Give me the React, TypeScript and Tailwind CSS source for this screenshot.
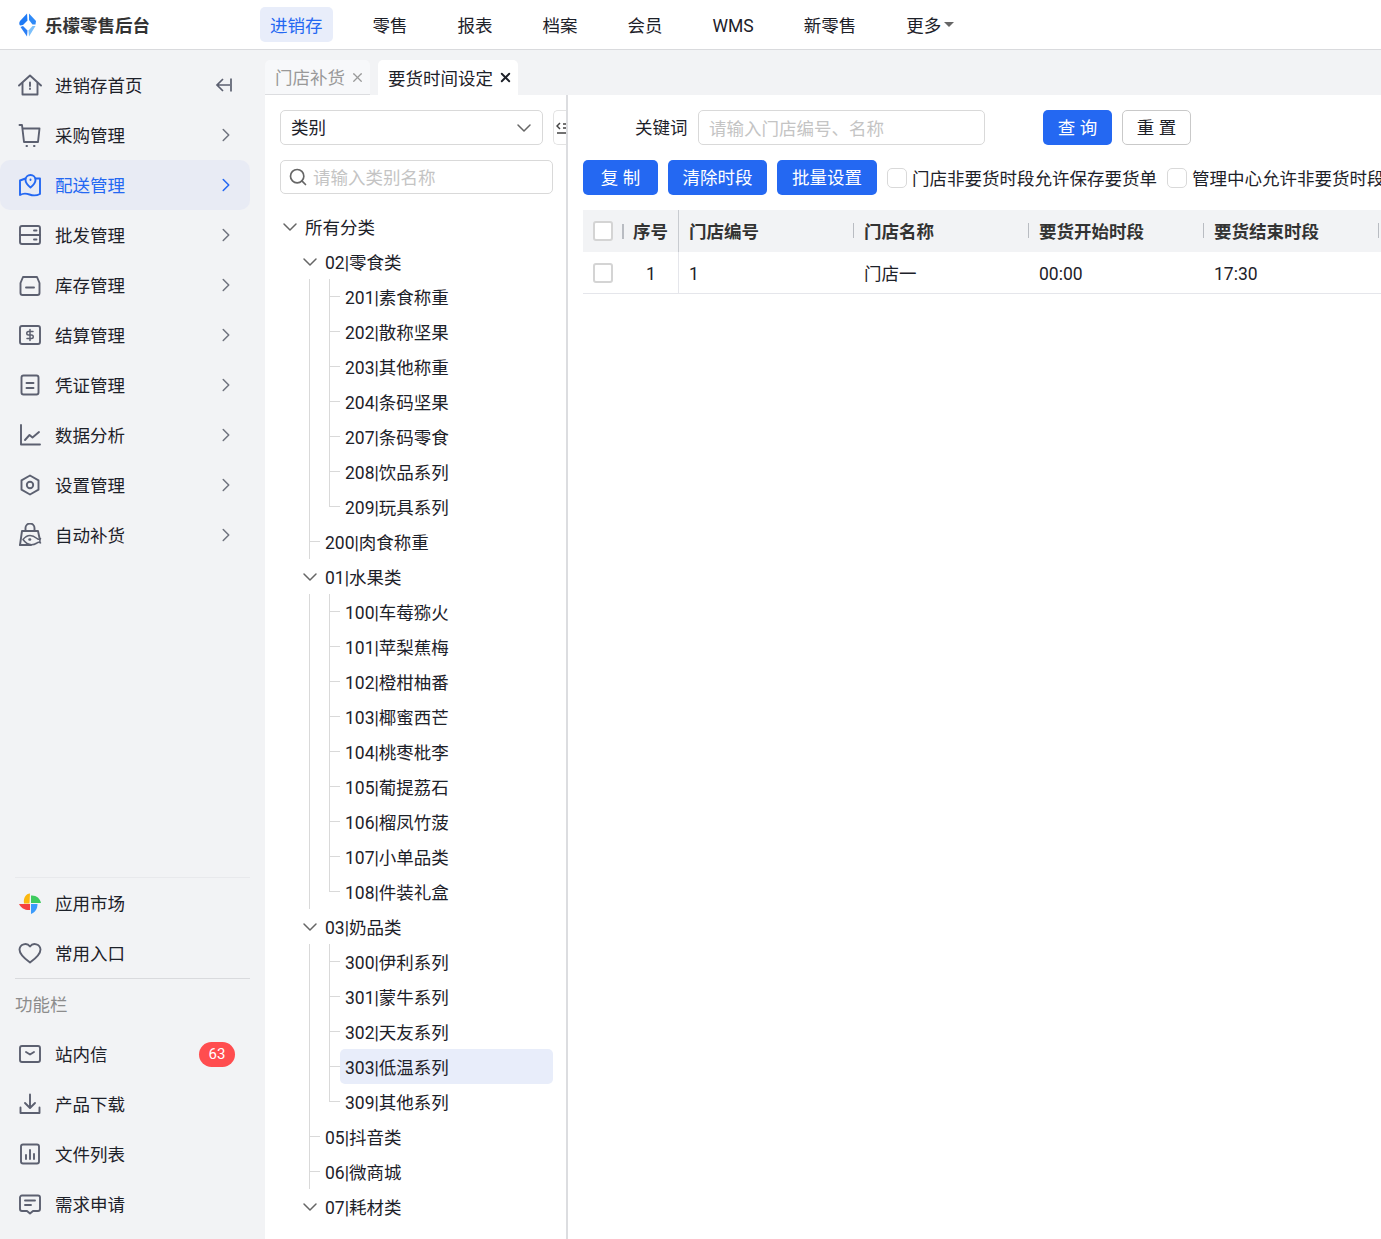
import { ChevronDown, ChevronRight, Search, X } from "lucide-react";
import type { ReactNode } from "react";

const stroke = "#5c6070";

function Icon({ children, color = stroke }: { children: ReactNode; color?: string }) {
  return (
    <svg width="24" height="24" viewBox="0 0 24 24" fill="none" stroke={color} strokeWidth="1.9" strokeLinecap="round" strokeLinejoin="round" className="shrink-0">
      {children}
    </svg>
  );
}

const icons: Record<string, ReactNode> = {
  home: (
    <>
      <path d="M1 12.500 12 2.500l11 10" />
      <path d="M4.500 10v11.500h15V10" />
      <path d="M12 9.500v3.500M12 15.500v.5" />
    </>
  ),
  cart: (
    <>
      <path d="M1.500 2h2.500L6 19h14l1.500-13.500H5" />
      <path d="M8.500 23h.5M16 23h.5" strokeWidth="2" />
    </>
  ),
  map: (
    <>
      <path d="M7.500 5.500 2 7.500V22c3-1.800 6-1.800 9.500-.5s7.500 1 10.500-.5V5.500l-4.500 0" />
      <path d="M12.500 14.500c-3-2.500-5-4.800-5-7.500a5 5 0 0 1 10 0c0 2.700-2 5-5 7.500Z" />
      <path d="M12.500 6.500v.5" />
    </>
  ),
  server: (
    <>
      <rect x="2" y="3" width="20" height="18" rx="2" />
      <path d="M2 12h20M16 7.500h2.500M16 16.500h2.500" />
    </>
  ),
  box: (
    <>
      <path d="M5 4h14l2.500 6v10a2 2 0 0 1-2 2h-15a2 2 0 0 1-2-2V10Z" />
      <path d="M8 14.500h8" />
    </>
  ),
  money: (
    <>
      <rect x="2" y="3" width="20" height="18" rx="2" />
      <path d="M15 8.500h-4.500a1.700 1.700 0 0 0 0 3.500h3a1.700 1.700 0 0 1 0 3.500H9M12 6.500v11" strokeWidth="1.500" />
    </>
  ),
  doc: (
    <>
      <rect x="3.500" y="2.500" width="17" height="19" rx="2" />
      <path d="M8.500 10h7M8.500 15h7" />
    </>
  ),
  chart: (
    <>
      <path d="M3 2v19.500h19" />
      <path d="M7 17l4.500-5 3 2.500L21 9" />
    </>
  ),
  hex: (
    <>
      <path d="m12 2.500 8.500 4.800v9.400L12 21.500l-8.500-4.800V7.300Z" />
      <circle cx="12" cy="12" r="3.200" />
    </>
  ),
  bag: (
    <>
      <path d="M2 22 4 8h16l1.500 7" />
      <path d="M7.500 8V5a4.500 4.500 0 0 1 9 0v3" />
      <path d="M2 22h11" />
      <path d="M5 16.500c4-5 9-5 14-1 1 1 2 1 3.500 0-1 2-1 3 0 4.500-1.500-1-2.500-1-3.500 0-5 3-10 2-14-3.500Z" strokeWidth="1.500" />
      <path d="M11.500 16.500h.5" strokeWidth="2.500" />
    </>
  ),
  heart: <path d="M12 21.500C5 16.500 1.500 13 1.500 8.500A5.800 5.800 0 0 1 12 5.500a5.800 5.800 0 0 1 10.500 3c0 4.500-3.500 8-10.500 13Z" />,
  inbox: (
    <>
      <rect x="2" y="4" width="20" height="16" rx="2" />
      <path d="m8 10 4 2.500 4-2.500" />
    </>
  ),
  download: <path d="M12 2.500v13M7 11l5 5 5-5M2.500 15.500v5.500h19v-5.500" />,
  bars: (
    <>
      <rect x="3" y="2.500" width="18" height="19" rx="2" />
      <path d="M8 13v4M12 8v9M16 12v5" />
    </>
  ),
  message: (
    <>
      <path d="M4 3.500h16a2 2 0 0 1 2 2V17a2 2 0 0 1-2 2h-5l-3 2.500L9 19H4a2 2 0 0 1-2-2V5.500a2 2 0 0 1 2-2Z" />
      <path d="M7 8.500h10M7 13h6" />
    </>
  ),
};

function Pinwheel() {
  return (
    <svg width="24" height="24" viewBox="0 0 24 24" className="shrink-0">
      <path d="M12 2.500C8 2.500 5 7 6 12.500h5.500Z" fill="#fbb80f" />
      <path d="M13 12V4.500c5-.5 9 2.500 10 7.500Z" fill="#3ecb5f" />
      <path d="M1 13h11v6c-5 .5-9-2-11-6Z" fill="#f5413f" />
      <path d="M13 13h6.500c0 5-2.500 8.500-6.500 10Z" fill="#3b9bfb" />
    </svg>
  );
}

function Logo() {
  return (
    <svg width="18" height="24" viewBox="0 0 18 24" className="shrink-0">
      <path d="M8 .5 1 8c-1 1.500-1 3 0 4.500l3-.5 4.500-4.500Z" fill="#1f7af5" />
      <path d="M10 .5 17 8l-.5 3.500h-3L10 7Z" fill="#2f8af7" />
      <path d="M1.500 14 8 23.500l.5-6L4 13Z" fill="#2a7ef5" />
      <path d="M16.500 13 10 23.500l-.5-6 4-4.500Z" fill="#7cc0fb" />
    </svg>
  );
}

function NavRow({ icon, label, active, arrow = true, extra }: { icon: ReactNode; label: string; active?: boolean; arrow?: boolean; extra?: ReactNode }) {
  return (
    <div className={`flex h-[50px] items-center rounded-[10px] pl-[18px] ${active ? "bg-[#e8ebf4] text-[#2468f2]" : "text-[#1d2129]"}`}>
      {icon}
      <span className="ml-[13px] flex-1 pt-[4px]">{label}</span>
      {extra}
      {arrow && <ChevronRight size={22} strokeWidth={1.7} className={`mr-[13px] ${active ? "text-[#2468f2]" : "text-[#70747f]"}`} />}
    </div>
  );
}

const topMenu = [
  ["home", "进销存首页"],
  ["cart", "采购管理"],
  ["map", "配送管理"],
  ["server", "批发管理"],
  ["box", "库存管理"],
  ["money", "结算管理"],
  ["doc", "凭证管理"],
  ["chart", "数据分析"],
  ["hex", "设置管理"],
  ["bag", "自动补货"],
];

function Sidebar() {
  return (
    <aside className="flex w-[265px] shrink-0 flex-col justify-between bg-[#f2f3f5] pb-[10px] pr-[15px] pt-[10px]">
      <div>
        {topMenu.map(([key, label]) => (
          <NavRow
            key={key}
            label={label}
            active={key === "map"}
            arrow={key !== "home"}
            icon={<Icon color={key === "map" ? "#2468f2" : stroke}>{icons[key]}</Icon>}
            extra={
              key === "home" ? (
                <svg width="18" height="16" viewBox="0 0 18 16" fill="none" stroke="#5c6070" strokeWidth="1.700" className="mr-[17px]">
                  <path d="M8 2 2 8l6 6M2 8h13M16 1.500v13" />
                </svg>
              ) : null
            }
          />
        ))}
      </div>
      <div>
        <div className="ml-[15px] border-t border-[#e8e9ec]">
          <div className="-ml-[15px]">
            <NavRow icon={<Pinwheel />} label="应用市场" arrow={false} />
            <NavRow icon={<Icon>{icons.heart}</Icon>} label="常用入口" arrow={false} />
          </div>
        </div>
        <div className="ml-[15px] flex h-[51px] items-center border-t border-[#d9dadd] pt-[4px] text-[#8c8c8c]">功能栏</div>
        <NavRow
          icon={<Icon>{icons.inbox}</Icon>}
          label="站内信"
          arrow={false}
          extra={<span className="mr-[15px] flex h-[25px] w-[36px] items-center justify-center rounded-full bg-[#ff4d4f] text-[15px] text-white">63</span>}
        />
        <NavRow icon={<Icon>{icons.download}</Icon>} label="产品下载" arrow={false} />
        <NavRow icon={<Icon>{icons.bars}</Icon>} label="文件列表" arrow={false} />
        <NavRow icon={<Icon>{icons.message}</Icon>} label="需求申请" arrow={false} />
      </div>
    </aside>
  );
}

type TreeRow = { text: string; level: 0 | 1 | 2; open?: boolean; last?: boolean; selected?: boolean };

const leaves = (items: string[], selected?: string): TreeRow[] =>
  items.map((text, i) => ({ text, level: 2, last: i === items.length - 1, selected: text === selected }));

const tree: TreeRow[] = [
  { text: "所有分类", level: 0, open: true },
  { text: "02|零食类", level: 1, open: true },
  ...leaves(["201|素食称重", "202|散称坚果", "203|其他称重", "204|条码坚果", "207|条码零食", "208|饮品系列", "209|玩具系列"]),
  { text: "200|肉食称重", level: 1 },
  { text: "01|水果类", level: 1, open: true },
  ...leaves(["100|车莓猕火", "101|苹梨蕉梅", "102|橙柑柚番", "103|椰蜜西芒", "104|桃枣枇李", "105|葡提荔石", "106|榴凤竹菠", "107|小单品类", "108|件装礼盒"]),
  { text: "03|奶品类", level: 1, open: true },
  ...leaves(["300|伊利系列", "301|蒙牛系列", "302|天友系列", "303|低温系列", "309|其他系列"], "303|低温系列"),
  { text: "05|抖音类", level: 1 },
  { text: "06|微商城", level: 1 },
  { text: "07|耗材类", level: 1, open: true },
];

function TreeLine({ row }: { row: TreeRow }) {
  if (row.level === 0) return null;
  return (
    <>
      {!(row.level === 1 && row.open) && <span className="absolute bottom-0 left-[44px] top-0 w-px bg-[#d9d9d9]" />}
      {row.level === 1 && !row.open && <span className="absolute left-[44px] top-[17px] h-px w-[11px] bg-[#d9d9d9]" />}
      {row.level === 2 && (
        <>
          <span className={`absolute left-[64px] top-0 w-px bg-[#d9d9d9] ${row.last ? "h-[18px]" : "h-full"}`} />
          <span className="absolute left-[64px] top-[17px] h-px w-[11px] bg-[#d9d9d9]" />
        </>
      )}
    </>
  );
}

function TreePanel() {
  return (
    <div className="relative w-[303px] shrink-0 border-r-2 border-[#dcdde0] bg-white pl-[15px] pt-[15px]">
      <div className="flex h-[35px] w-[263px] items-center justify-between rounded-[5px] border border-[#d9d9d9] pl-[10px] pr-[6px]">
        <span className="pt-[2px]">类别</span>
        <ChevronDown size={24} strokeWidth={1.500} className="text-[#666]" />
      </div>
      <div className="absolute right-0 top-[15px] flex h-[35px] w-[13px] items-center overflow-hidden rounded-l-[5px] border border-r-0 border-[#e3e3e3]">
        <svg width="16" height="14" viewBox="0 0 16 14" fill="none" stroke="#444" strokeWidth="1.500" className="ml-[2px] shrink-0">
          <path d="M4 2 1 5l3 3M7 3h8M7 7h8M1 12h14" />
        </svg>
      </div>
      <div className="mt-[15px] flex h-[34px] w-[273px] items-center rounded-[5px] border border-[#d9d9d9] pl-[7px]">
        <Search size={20} strokeWidth={2} className="shrink-0 text-[#666]" />
        <input placeholder="请输入类别名称" className="ml-[5px] w-[200px] pt-[2px] outline-none placeholder:text-[#c4c4c4]" />
      </div>
      <div className="-ml-[15px] mt-[15px]">
        {tree.map((row) => {
          const textLeft = row.level === 0 ? "ml-[40px]" : row.level === 1 ? "ml-[60px]" : "ml-[75px] pl-[5px]";
          return (
            <div key={row.text} className="relative flex h-[35px] items-center">
              <TreeLine row={row} />
              {row.open && (
                <ChevronDown
                  size={24}
                  strokeWidth={1.500}
                  className={`absolute top-[6px] text-[#666] ${row.level === 0 ? "left-[13px]" : "left-[33px]"}`}
                />
              )}
              <div className={`flex h-[35px] items-center rounded-[5px] pt-[4px] ${textLeft} ${row.selected ? "w-[213px] bg-[#e8edfa]" : ""}`}>{row.text}</div>
            </div>
          );
        })}
      </div>
    </div>
  );
}

function Btn({ children, w }: { children: ReactNode; w: string }) {
  return <button className={`flex h-[35px] items-center justify-center rounded-[5px] bg-[#2468f2] pt-[3px] text-white ${w}`}>{children}</button>;
}

function CheckLabel({ label }: { label: string }) {
  return (
    <label className="flex shrink-0 items-center whitespace-nowrap">
      <span className="mr-[5px] h-[20px] w-[20px] rounded-[5px] border border-[#d9d9d9] bg-white" />
      <span className="pt-[4px]">{label}</span>
    </label>
  );
}

const tableBox = "h-[20px] w-[20px] rounded-[3px] border-2 border-[#d4d4d4] bg-white";
const colSep = "absolute right-[0px] top-[13px] h-[15px] w-px bg-[#b9bcc2]";

function HeadCell({ children }: { children: ReactNode }) {
  return (
    <div className="relative flex w-[175px] shrink-0 items-center pl-[10px] pt-[4px]">
      {children}
      <span className={colSep} />
    </div>
  );
}

function DataTable() {
  return (
    <div className="mt-[15px] overflow-hidden">
      <div className="flex h-[42px] w-[900px] items-stretch bg-[#f2f3f5] font-bold text-[#333]">
        <div className="flex w-[96px] shrink-0 items-center border-r border-[#c8cbd0] pl-[10px]">
          <span className={tableBox} />
          <span className="ml-[9px] h-[15px] w-[2px] bg-[#b9bcc2]" />
          <span className="ml-[9px] pt-[4px]">序号</span>
        </div>
        <HeadCell>门店编号</HeadCell>
        <HeadCell>门店名称</HeadCell>
        <HeadCell>要货开始时段</HeadCell>
        <HeadCell>要货结束时段</HeadCell>
      </div>
      <div className="flex h-[42px] w-[900px] items-stretch border-b border-[#e5e6eb] text-[#1d2129]">
        <div className="flex w-[96px] shrink-0 items-center border-r border-[#e5e6eb] pl-[10px]">
          <span className={tableBox} />
          <span className="ml-[33px] pt-[4px]">1</span>
        </div>
        <div className="flex w-[175px] shrink-0 items-center pl-[10px] pt-[4px]">1</div>
        <div className="flex w-[175px] shrink-0 items-center pl-[10px] pt-[4px]">门店一</div>
        <div className="flex w-[175px] shrink-0 items-center pl-[10px] pt-[4px]">00:00</div>
        <div className="flex w-[175px] shrink-0 items-center pl-[10px] pt-[4px]">17:30</div>
      </div>
    </div>
  );
}

function MainPanel() {
  return (
    <div className="min-w-0 flex-1 overflow-hidden bg-white pl-[15px] pt-[15px]">
      <div className="flex h-[35px] items-center">
        <span className="ml-[52px] w-[53px] shrink-0 pt-[2px]">关键词</span>
        <input
          placeholder="请输入门店编号、名称"
          className="ml-[10px] h-[35px] w-[287px] shrink-0 rounded-[5px] border border-[#d9d9d9] px-[10px] pt-[2px] outline-none placeholder:text-[#c4c4c4]"
        />
        <div className="ml-[58px] shrink-0">
          <Btn w="w-[69px]">查 询</Btn>
        </div>
        <button className="ml-[10px] flex h-[35px] w-[69px] shrink-0 items-center justify-center rounded-[5px] border border-[#c9c9c9] pt-[3px]">重 置</button>
      </div>
      <div className="mt-[15px] flex h-[35px] items-center gap-[10px]">
        <Btn w="w-[75px] shrink-0">复 制</Btn>
        <Btn w="w-[99px] shrink-0">清除时段</Btn>
        <Btn w="w-[100px] shrink-0">批量设置</Btn>
        <CheckLabel label="门店非要货时段允许保存要货单" />
        <CheckLabel label="管理中心允许非要货时段保存要货单" />
      </div>
      <DataTable />
    </div>
  );
}

export default function App() {
  return (
    <div className="flex h-[1239px] w-[1381px] flex-col overflow-hidden bg-white font-['Roboto','Noto_Sans_CJK_SC',sans-serif] text-[17.5px] leading-none text-[#1d2129]">
      <header className="flex h-[50px] shrink-0 items-center border-b border-[#d9dadd] bg-white">
        <div className="flex w-[260px] shrink-0 items-center pl-[19px]">
          <Logo />
          <span className="ml-[8px] pt-[4px] font-bold text-[#333]">乐檬零售后台</span>
        </div>
        <nav className="flex items-center gap-[30px]">
          <span className="flex h-[35px] items-center rounded-[5px] bg-[#e8edfa] px-[10px] pt-[4px] text-[#2468f2]">进销存</span>
          {["零售", "报表", "档案", "会员", "WMS", "新零售"].map((m) => (
            <span key={m} className="px-[10px] pt-[4px]">
              {m}
            </span>
          ))}
          <span className="flex items-center px-[10px]">
            <span className="pt-[4px]">更多</span>
            <span className="ml-[3px] h-0 w-0 border-x-[5px] border-t-[5px] border-x-transparent border-t-[#666]" />
          </span>
        </nav>
      </header>
      <div className="flex min-h-0 flex-1">
        <Sidebar />
        <div className="flex min-w-0 flex-1 flex-col bg-[#f2f3f5]">
          <div className="flex h-[45px] shrink-0 items-end gap-[8px]">
            <div className="flex h-[35px] w-[105px] items-center rounded-t-[5px] border-b border-[#dcdde0] bg-[#f7f8fa] pl-[10px] text-[#999]">
              <span className="pt-[4px]">门店补货</span>
              <X size={15} strokeWidth={2} className="ml-[5px] text-[#999]" />
            </div>
            <div className="flex h-[35px] w-[140px] items-center rounded-t-[5px] bg-white pl-[10px]">
              <span className="pt-[4px]">要货时间设定</span>
              <X size={15} strokeWidth={3} className="ml-[5px] text-[#1d2129]" />
            </div>
          </div>
          <div className="flex min-h-0 flex-1">
            <TreePanel />
            <MainPanel />
          </div>
        </div>
      </div>
    </div>
  );
}
